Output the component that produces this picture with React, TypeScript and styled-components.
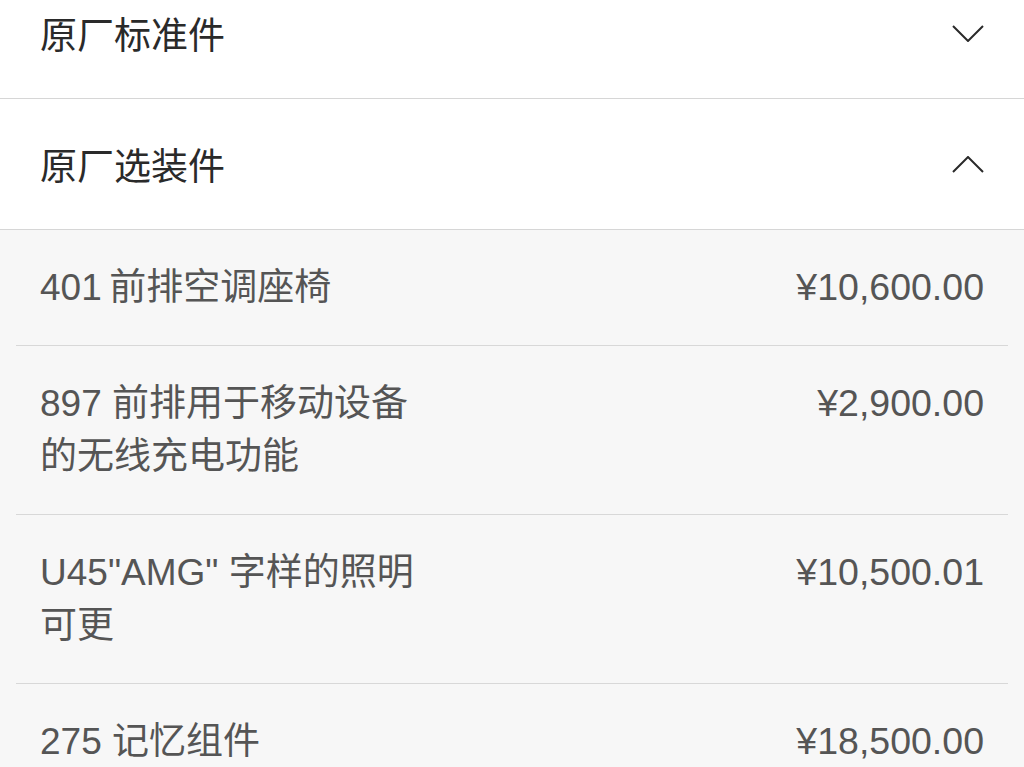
import styled, { createGlobalStyle } from "styled-components";

const GlobalStyle = createGlobalStyle`
  html, body {
    margin: 0;
    padding: 0;
    background: #f7f7f7;
  }
  body {
    font-family: "Liberation Sans", "Noto Sans CJK SC", sans-serif;
    overflow: hidden;
  }
`;

const Page = styled.div`
  margin-top: -32px;
  min-height: 800px;
  background: #f7f7f7;
`;

const SectionHeader = styled.div`
  display: flex;
  align-items: center;
  justify-content: space-between;
  height: 130px;
  padding: 0 40px;
  background: #ffffff;
  border-bottom: 1px solid #d6d6d6;
`;

const SectionTitle = styled.span`
  font-size: 37px;
  color: #2a2a2a;
`;

const Chevron = styled.svg<{ open?: boolean }>`
  width: 32px;
  height: 17px;
  transform: ${({ open }) => (open ? "rotate(180deg)" : "none")};
`;

const ItemList = styled.div`
  background: #f7f7f7;
  padding: 0 16px;
`;

const ItemRow = styled.div`
  display: flex;
  justify-content: space-between;
  align-items: flex-start;
  padding: 31px 24px;
  border-bottom: 1px solid #d8d8d8;
  font-size: 37px;
  line-height: 53px;
  color: #555555;
`;

const ItemName = styled.div`
  white-space: pre-line;
`;

const ItemPrice = styled.div`
  white-space: nowrap;
  font-size: 37.5px;
`;

const sections = [
  { title: "原厂标准件", open: false },
  { title: "原厂选装件", open: true },
];

const options = [
  { name: "401\u2009前排空调座椅", price: "¥10,600.00" },
  { name: "897 前排用于移动设备\n的无线充电功能", price: "¥2,900.00" },
  { name: 'U45"AMG" 字样的照明\n可更', price: "¥10,500.01" },
  { name: "275 记忆组件", price: "¥18,500.00" },
];

const ChevronIcon = ({ open }: { open?: boolean }) => (
  <Chevron open={open} viewBox="0 0 32 17">
    <polyline
      points="1,1 16,16 31,1"
      fill="none"
      stroke="#2a2a2a"
      strokeWidth="2"
    />
  </Chevron>
);

const App = () => {
  return (
    <Page>
      <GlobalStyle />
      {sections.map((s) => (
        <SectionHeader key={s.title}>
          <SectionTitle>{s.title}</SectionTitle>
          <ChevronIcon open={s.open} />
        </SectionHeader>
      ))}
      <ItemList>
        {options.map((o) => (
          <ItemRow key={o.price}>
            <ItemName>{o.name}</ItemName>
            <ItemPrice>{o.price}</ItemPrice>
          </ItemRow>
        ))}
      </ItemList>
    </Page>
  );
};

export default App;
